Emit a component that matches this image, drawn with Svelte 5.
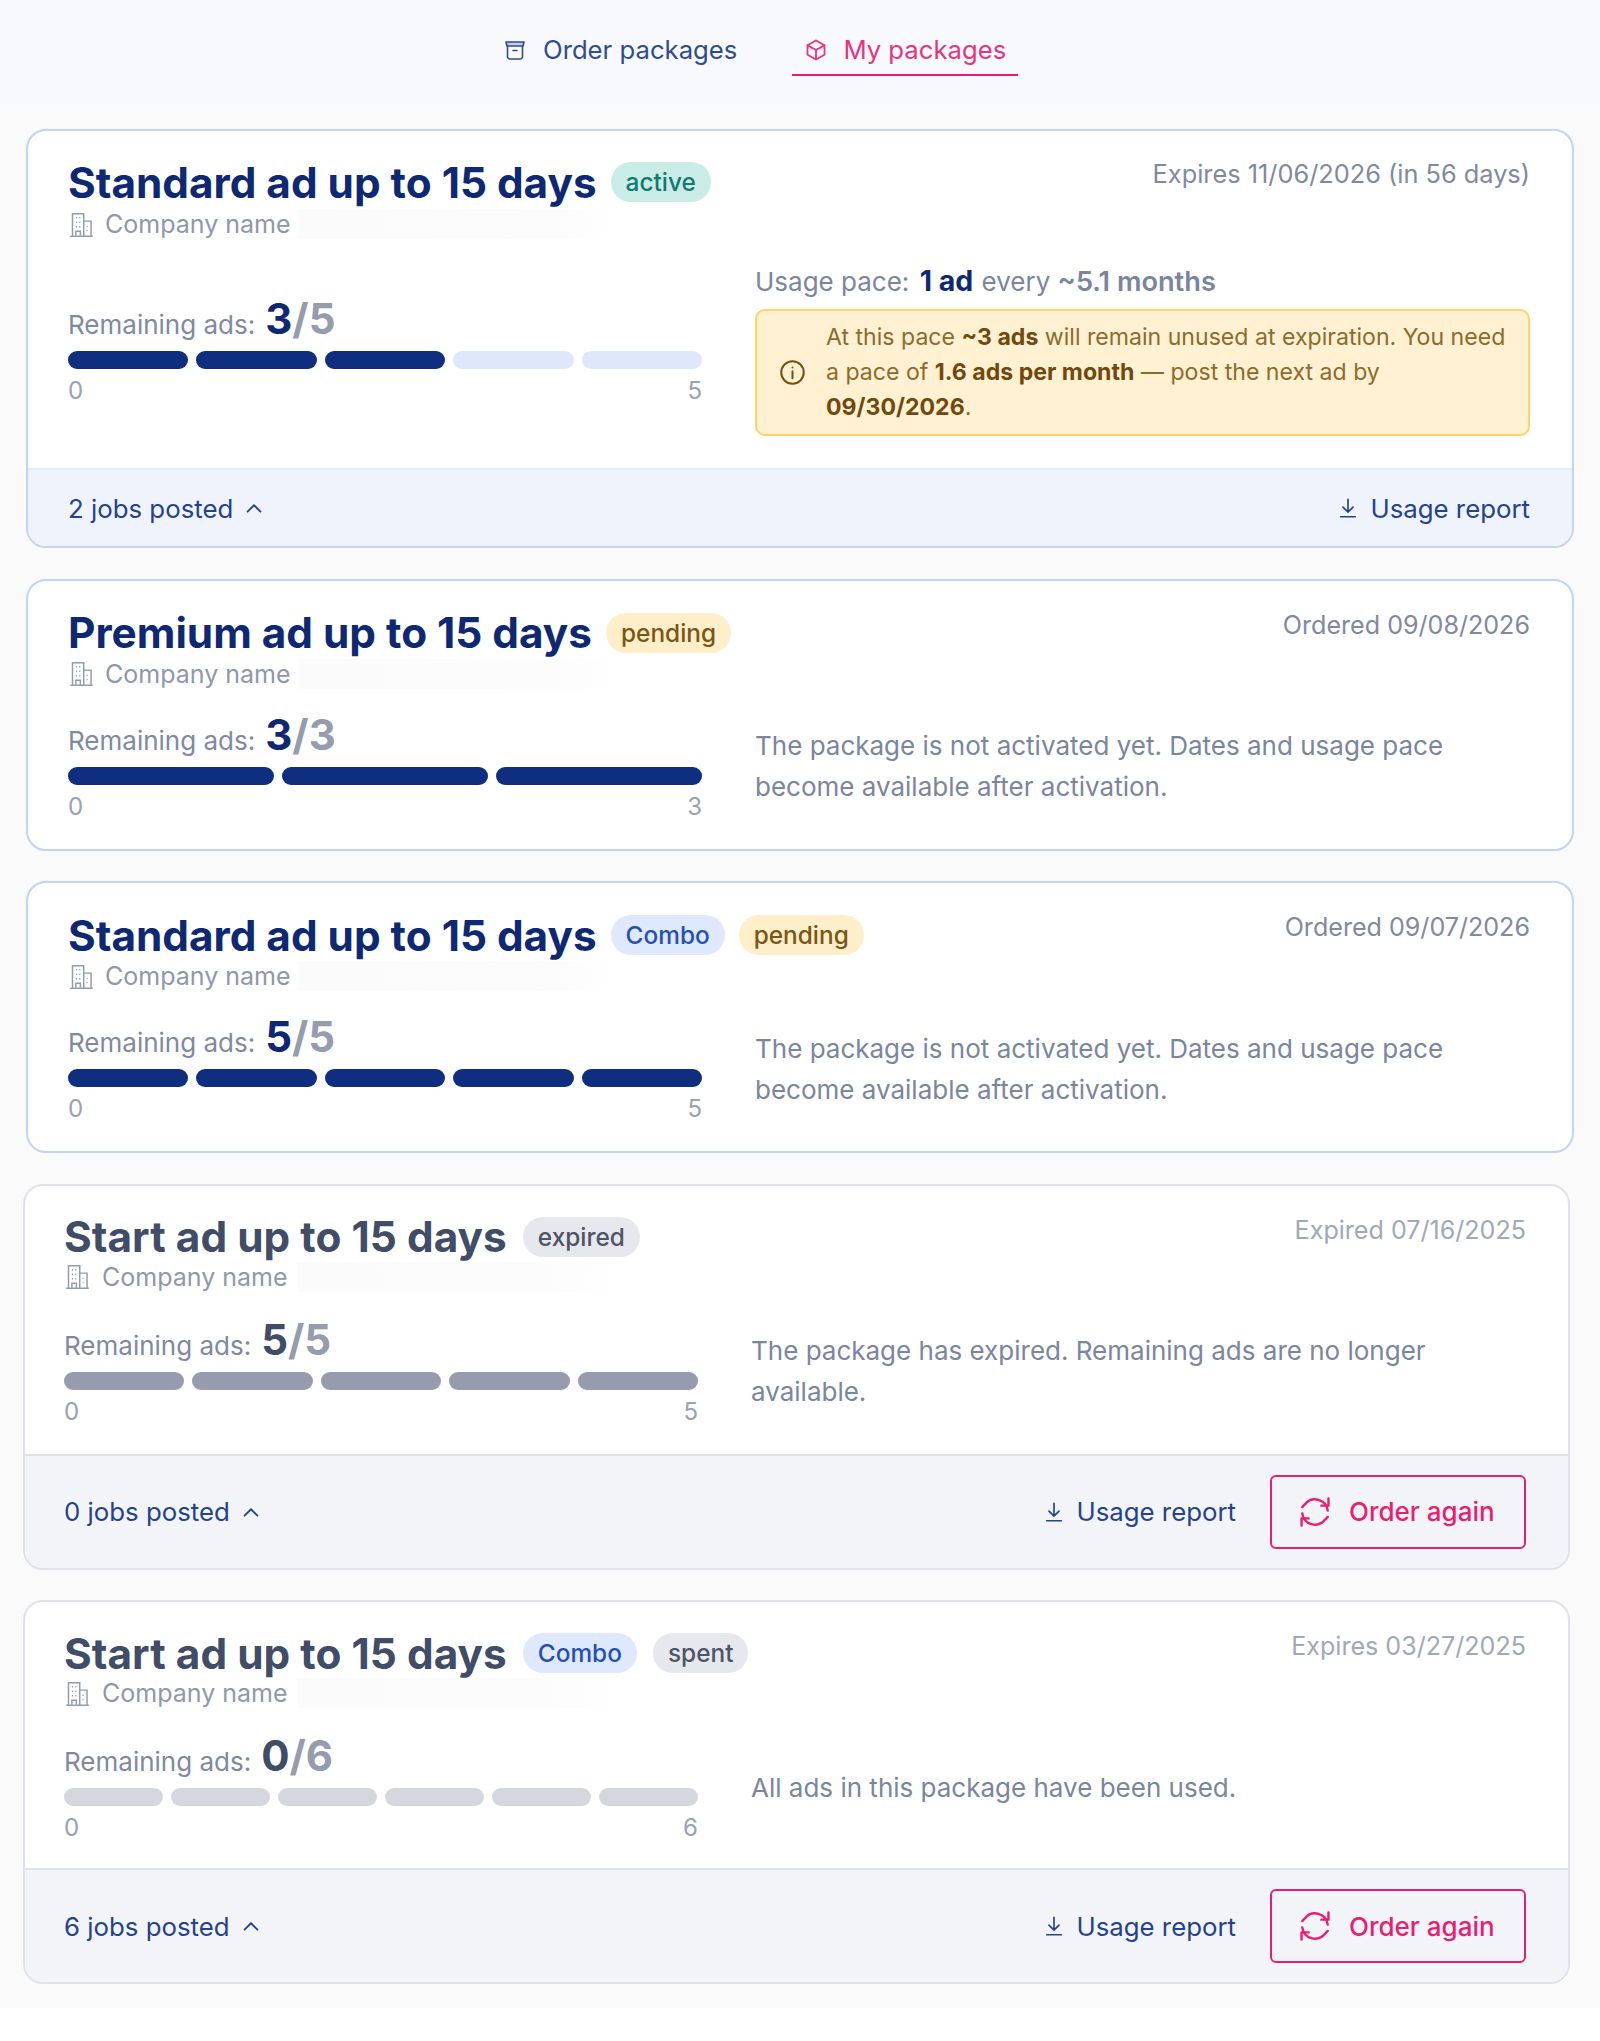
<script>
  const cards = [
    { title: 'Standard ad up to 15 days', badges: [['active', 'active']], date: 'Expires 11/06/2026 (in 56 days)', left: 3, total: 5, tone: 'on', footer: '2 jobs posted', warn: true },
    { title: 'Premium ad up to 15 days', badges: [['pending', 'pending']], date: 'Ordered 09/08/2026', left: 3, total: 3, tone: 'on', note: 'The package is not activated yet. Dates and usage pace become available after activation.' },
    { title: 'Standard ad up to 15 days', badges: [['Combo', 'combo'], ['pending', 'pending']], date: 'Ordered 09/07/2026', left: 5, total: 5, tone: 'on', note: 'The package is not activated yet. Dates and usage pace become available after activation.' },
    { title: 'Start ad up to 15 days', badges: [['expired', 'muted']], date: 'Expired 07/16/2025', left: 5, total: 5, tone: 'off', note: 'The package has expired. Remaining ads are no longer available.', footer: '0 jobs posted', again: true },
    { title: 'Start ad up to 15 days', badges: [['Combo', 'combo'], ['spent', 'muted']], date: 'Expires 03/27/2025', left: 0, total: 6, tone: 'off', note: 'All ads in this package have been used.', footer: '6 jobs posted', again: true }
  ];
</script>

<div class="page">
  <nav class="tabs">
    <a class="tab">
      <svg class="tab-icon" viewBox="0 0 24 24" fill="none" stroke="currentColor" stroke-width="1.6" stroke-linecap="round" stroke-linejoin="round">
        <path d="M3 4h18l-1 4H4z" fill="currentColor" fill-opacity=".25" />
        <path d="M4.5 8v10.5A2.5 2.5 0 0 0 7 21h10a2.5 2.5 0 0 0 2.5-2.5V8" />
        <path d="M10 12.5h4" />
      </svg>
      Order packages
    </a>
    <a class="tab active">
      <svg class="tab-icon" viewBox="0 0 24 24" fill="none" stroke="currentColor" stroke-width="1.8" stroke-linecap="round" stroke-linejoin="round">
        <path d="M12 2.5l8.5 4.8v9.4L12 21.5l-8.5-4.8V7.3z" />
        <path d="M3.7 7.4L12 12l8.3-4.6M12 12v9.3" />
      </svg>
      My packages
    </a>
  </nav>

  <main class="list">
    {#each cards as c, i}
      <section class="card {c.tone}" class:shifted={i > 2} class:warned={c.warn}>
        <div class="top">
          <div class="head">
            <div class="title-block">
              <div class="title-row">
                <h2>{c.title}</h2>
                {#each c.badges as b}
                  <span class="badge {b[1]}">{b[0]}</span>
                {/each}
              </div>
              <div class="company">
                <svg class="building" viewBox="0 0 24 24" fill="none" stroke="currentColor" stroke-width="1.3">
                  <path d="M2 22.5h20M4 22V2.5h10V22M14 9h6.5v13" />
                  <path d="M7 6h1M10 6h1M7 10h1M10 10h1M7 14h1M10 14h1M7 22v-4h4v4M17 13v1M17 17v1" />
                </svg>
                <span>Company name</span>
                <span class="redacted"></span>
              </div>
            </div>
            <div class="date">{c.date}</div>
          </div>

          <div class="body">
            <div class="usage">
              <div class="remaining">
                <span>Remaining ads:</span>
                <b class="count"><span class="num">{c.left}</span><span class="slash">/{c.total}</span></b>
              </div>
              <div class="bars">
                {#each Array(c.total) as _, n}
                  <i class="bar" class:filled={n < c.left} class:empty={n >= c.left}></i>
                {/each}
              </div>
              <div class="scale"><span>0</span><span>{c.total}</span></div>
            </div>

            <div class="side">
              {#if c.warn}
                <p class="pace">Usage pace: <b class="navy">1 ad</b> every <b class="soft">~5.1 months</b></p>
                <div class="warning">
                  <svg class="info" viewBox="0 0 24 24" fill="none" stroke="currentColor" stroke-width="1.8" stroke-linecap="round">
                    <circle cx="12" cy="12" r="10" />
                    <path d="M12 11v6M12 7.5v.1" />
                  </svg>
                  <p>At this pace <b>~3 ads</b> will remain unused at expiration. You need a pace of <b>1.6 ads per month</b> — post the next ad by <b>09/30/2026</b>.</p>
                </div>
              {:else}
                <p class="note">{c.note}</p>
              {/if}
            </div>
          </div>
        </div>

        {#if c.footer}
          <footer class:tall={c.again}>
            <a class="jobs">
              {c.footer}
              <svg class="chev" viewBox="0 0 24 24" fill="none" stroke="currentColor" stroke-width="2" stroke-linecap="round" stroke-linejoin="round"><path d="M5 16l7-7 7 7" /></svg>
            </a>
            <div class="actions">
              <a class="report">
                <svg class="dl" viewBox="0 0 24 24" fill="none" stroke="currentColor" stroke-width="1.8" stroke-linecap="round" stroke-linejoin="round">
                  <path d="M12 2.5v14M6.5 11l5.5 5.5 5.5-5.5M4 21.5h16" />
                </svg>
                Usage report
              </a>
              {#if c.again}
                <button class="again">
                  <svg class="cycle" viewBox="0 0 24 24" fill="none" stroke="currentColor" stroke-width="1.7" stroke-linecap="round" stroke-linejoin="round">
                    <path d="M21 11a9 9 0 0 0-16-4.5L3 8.5" />
                    <path d="M16.5 7.5H21.5V2.5" />
                    <path d="M3 13a9 9 0 0 0 16 4.5l2-2" />
                    <path d="M7.5 16.5H2.5V21.5" />
                  </svg>
                  Order again
                </button>
              {/if}
            </div>
          </footer>
        {/if}
      </section>
    {/each}
  </main>
</div>

<style>
  :global(body) { margin: 0; background: #fff; }
  .page { font-family: Inter, "Liberation Sans", sans-serif; color: #7a859e; }
  .tabs { display: flex; gap: 43px; padding: 25px 0 0 491px; height: 86px; background: #f7f9fd; }
  .tab { display: flex; align-items: center; gap: 16px; height: 51px; padding: 0 12px; font-size: 25.7px; color: #2f4c90; border-bottom: 2px solid transparent; box-sizing: border-box; }
  .tab.active { gap: 15px; color: #e8337e; border-bottom-color: #e91e73; }
  .tab-icon { width: 24px; height: 24px; }

  .list { display: flex; flex-direction: column; gap: 30.5px; padding: 18px 0 24px; background: #fafafa; }
  .card { margin: 0 26px; background: #fff; border: 2px solid #c3d3f5; border-radius: 20px; overflow: hidden; }
  .card.shifted { margin: 0 30px 0 23px; }
  .card.off { border-color: #e0e2ea; }
  .top { padding: 28px 42px 25px 40px; }
  .warned .top { padding-bottom: 32px; }
  .shifted .top { padding-left: 39px; }
  .card:last-child .top { padding-bottom: 23px; }
  .head { display: flex; justify-content: space-between; align-items: flex-start; }
  .title-row { display: flex; align-items: center; gap: 14px; height: 48px; }
  .warned .title-row { margin-top: -1px; margin-bottom: 1px; }
  .shifted .title-row { gap: 16px; margin-top: -1px; }
  h2 { margin: 0; font-size: 42.3px; font-weight: 700; color: #0e2872; white-space: nowrap; }
  .off h2 { color: #414c66; letter-spacing: 0.05px; }
  .badge { display: flex; align-items: center; height: 40px; padding: 0 15px; border-radius: 20px; font-size: 24.4px; font-weight: 500; }
  .badge.active { background: #c9ede6; color: #117a70; }
  .badge.pending { background: #feefca; color: #7d5513; }
  .badge.combo { background: #dfe8fc; color: #2450b5; }
  .badge.muted { background: #e6e8ed; color: #4d5468; }
  .company { display: flex; align-items: center; gap: 10px; height: 34px; font-size: 25px; color: #8e97ad; }
  .shifted .company { gap: 11px; margin-top: -1px; }
  .building { width: 27px; height: 27px; color: #939bb0; }
  .redacted { width: 322px; height: 30px; margin-left: -2px; background: linear-gradient(90deg, #fbfbfc, #fcfcfd 80%, #fff); }
  .date { margin-top: -1px; font-size: 25.1px; line-height: 34px; color: #8089a0; white-space: nowrap; }
  .warned .date { margin-top: -2px; font-size: 25.35px; }
  .off .date { color: #a1a8b8; }

  .body { display: grid; grid-template-columns: 634px 1fr; gap: 53px; align-items: center; margin-top: 18px; }
  .warned .body { margin-top: 23px; }
  .shifted .body { margin-top: 20px; }
  .remaining { display: flex; align-items: baseline; gap: 10px; font-size: 26px; color: #8089a0; }
  .count { font-size: 42px; font-weight: 700; line-height: 52px; }
  .num { color: #0e2872; }
  .slash { color: #949cae; }
  .off .num { color: #414c66; }
  .bars { display: flex; gap: 8px; margin-top: 6px; }
  .bar { flex: 1; height: 18px; border-radius: 9px; }
  .on .filled { background: #102e7f; }
  .on .empty { background: #dfe8fb; }
  .off .filled { background: #969cae; }
  .off .empty { background: #d5d7df; }
  .scale { display: flex; justify-content: space-between; margin-top: 5px; font-size: 24px; line-height: 34px; color: #9aa1b3; }

  .side p { margin: 0; }
  .pace { font-size: 26px; line-height: 34px; color: #7a859e; margin-bottom: 10px !important; }
  .navy { margin: 0 1px 0 3px; font-size: 28.5px; color: #0e2872; font-weight: 700; }
  .soft { font-size: 27.2px; font-weight: 600; color: #7a859e; }
  .note { font-size: 26px; line-height: 41px; color: #7a859e; }
  .warning { display: flex; align-items: center; gap: 20px; padding: 9px 12px 9px 22px; background: #fff1d1; border: 2px solid #fcd46a; border-radius: 10px; }
  .warning p { font-size: 23.1px; line-height: 35px; color: #8e6a2d; }
  .warning b { font-weight: 700; color: #71480e; }
  .info { flex: none; width: 27px; height: 27px; color: #76500f; }

  footer { display: flex; justify-content: space-between; align-items: center; height: 76px; padding: 0 42px 0 40px; background: #eff3fc; border-top: 2px solid #e6ebf6; }
  .shifted footer { padding-left: 39px; }
  footer.tall { height: 112px; background: #f3f4f8; border-top-color: #dfe2ea; }
  .jobs, .report { display: flex; align-items: center; font-size: 25.8px; color: #24438c; }
  .jobs { gap: 10px; }
  .chev { width: 22px; height: 22px; }
  .actions { display: flex; align-items: center; gap: 34px; }
  .report { gap: 11px; }
  .dl { width: 22px; height: 24px; }
  .again { display: flex; align-items: center; gap: 17px; width: 256px; height: 74px; padding: 0 0 0 26px; background: none; border: 2px solid #e91e73; border-radius: 6px; font: inherit; font-size: 26px; font-weight: 500; color: #e91e73; }
  .cycle { width: 34px; height: 34px; }
</style>
